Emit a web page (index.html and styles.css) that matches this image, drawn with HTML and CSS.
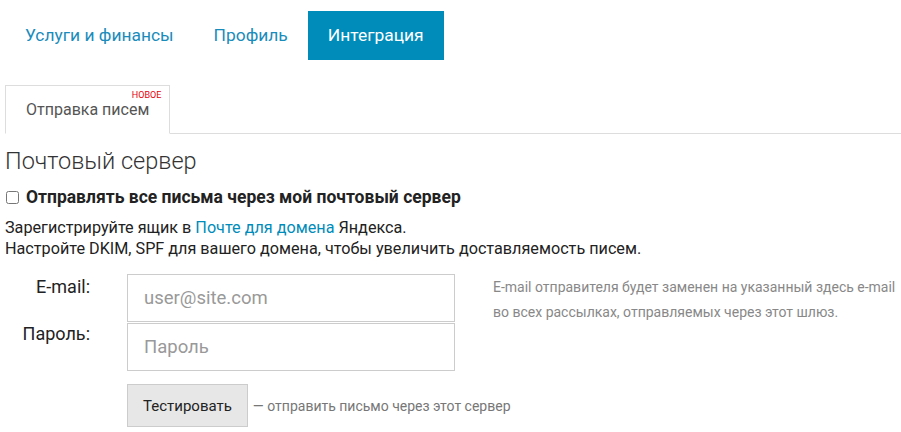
FILE: index.html
```html
<!DOCTYPE html>
<html lang="ru">
<head>
    <meta charset="utf-8">
    <title>Интеграция</title>
    <link rel="stylesheet" href="styles.css">
</head>
<body>
    <nav class="main-nav">
        <a href="#" class="nav-item">Услуги и финансы</a>
        <a href="#" class="nav-item">Профиль</a>
        <a href="#" class="nav-item active">Интеграция</a>
    </nav>

    <div class="sub-tabs">
        <a href="#" class="sub-tab">Отправка писем<span class="badge">НОВОЕ</span></a>
    </div>

    <h2 class="section-title">Почтовый сервер</h2>

    <label class="check-row">
        <input type="checkbox" class="check">
        <span>Отправлять все письма через мой почтовый сервер</span>
    </label>

    <p class="info">
        Зарегистрируйте ящик в <a href="#">Почте для домена</a> Яндекса.<br>
        Настройте DKIM, SPF для вашего домена, чтобы увеличить доставляемость писем.
    </p>

    <form class="smtp-form">
        <label class="field-label label-email">E-mail:</label>
        <input type="text" class="field field-email" placeholder="user@site.com">
        <p class="help">E-mail отправителя будет заменен на указанный здесь e-mail во всех рассылках, отправляемых через этот шлюз.</p>
        <label class="field-label label-pass">Пароль:</label>
        <input type="password" class="field field-pass" placeholder="Пароль">
        <div class="test-row">
            <button type="button" class="btn-test">Тестировать</button>
            <span class="test-note">— отправить письмо через этот сервер</span>
        </div>
    </form>
</body>
</html>
```

FILE: styles.css
```css
body {
    margin: 0;
    padding: 0 5px;
    font-family: Roboto, "Liberation Sans", sans-serif;
    color: #222;
    background: #fff;
}

a {
    color: #008cba;
    text-decoration: none;
}

.main-nav {
    display: flex;
    margin-top: 11px;
}

.nav-item {
    display: block;
    padding: 0 20px;
    height: 49px;
    line-height: 49px;
    font-size: 17.4px;
    color: #1a8cbb;
}

.nav-item.active {
    background: #008cba;
    color: #fff;
}

.sub-tabs {
    display: flex;
    margin-top: 25px;
    margin-right: -5px;
    border-bottom: 1px solid #ddd;
}

.sub-tab {
    position: relative;
    display: block;
    height: 47px;
    line-height: 47px;
    padding: 0 20px;
    margin-bottom: -1px;
    font-size: 16px;
    color: #555;
    background: #fff;
    border: 1px solid #ddd;
    border-bottom: 1px solid #fff;
}

.badge {
    position: absolute;
    top: 4px;
    right: 8px;
    font-size: 9px;
    line-height: 10px;
    color: #e8000b;
}

.section-title {
    margin: 14px 0 0;
    font-size: 23.5px;
    font-weight: 300;
    line-height: 27px;
    color: #333;
}

.check-row {
    display: flex;
    align-items: center;
    margin-top: 12px;
    font-size: 17.5px;
    font-weight: bold;
    color: #222;
}

.check {
    margin: 0 7px 0 1px;
    width: 13px;
    height: 13px;
}

.info {
    margin: 10px 0 0;
    font-size: 16.2px;
    line-height: 21px;
    color: #222;
}

.smtp-form {
    display: grid;
    grid-template-columns: 85px 328px auto;
    column-gap: 37px;
    margin-top: 15px;
}

.field-label {
    justify-self: end;
    font-size: 18px;
    color: #222;
}

.label-email {
    grid-row: 1;
    grid-column: 1;
    padding-top: 2px;
}

.label-pass {
    grid-row: 2;
    grid-column: 1;
    padding-top: 1px;
}

.field {
    box-sizing: border-box;
    width: 328px;
    height: 48px;
    margin: 0;
    padding: 0 16px;
    font-family: inherit;
    font-size: 18.5px;
    color: #333;
    border: 1px solid #ccc;
    border-radius: 0;
    outline: none;
}

.field::placeholder {
    color: #999;
}

.field-email {
    grid-row: 1;
    grid-column: 2;
}

.field-pass {
    grid-row: 2;
    grid-column: 2;
    margin-top: 1px;
}

.help {
    grid-row: 1 / 3;
    grid-column: 3;
    margin: 0 0 0 1px;
    padding-top: 1px;
    width: 405px;
    font-size: 14px;
    line-height: 25px;
    color: #888;
}

.test-row {
    grid-row: 3;
    grid-column: 2 / 4;
    display: flex;
    align-items: center;
    margin-top: 13px;
}

.btn-test {
    height: 43px;
    padding: 0 15px;
    font-family: inherit;
    font-size: 15px;
    color: #222;
    background: #e7e7e7;
    border: 1px solid #ccc;
    border-radius: 0;
}

.test-note {
    margin-left: 5px;
    font-size: 14px;
    color: #777;
}
```
